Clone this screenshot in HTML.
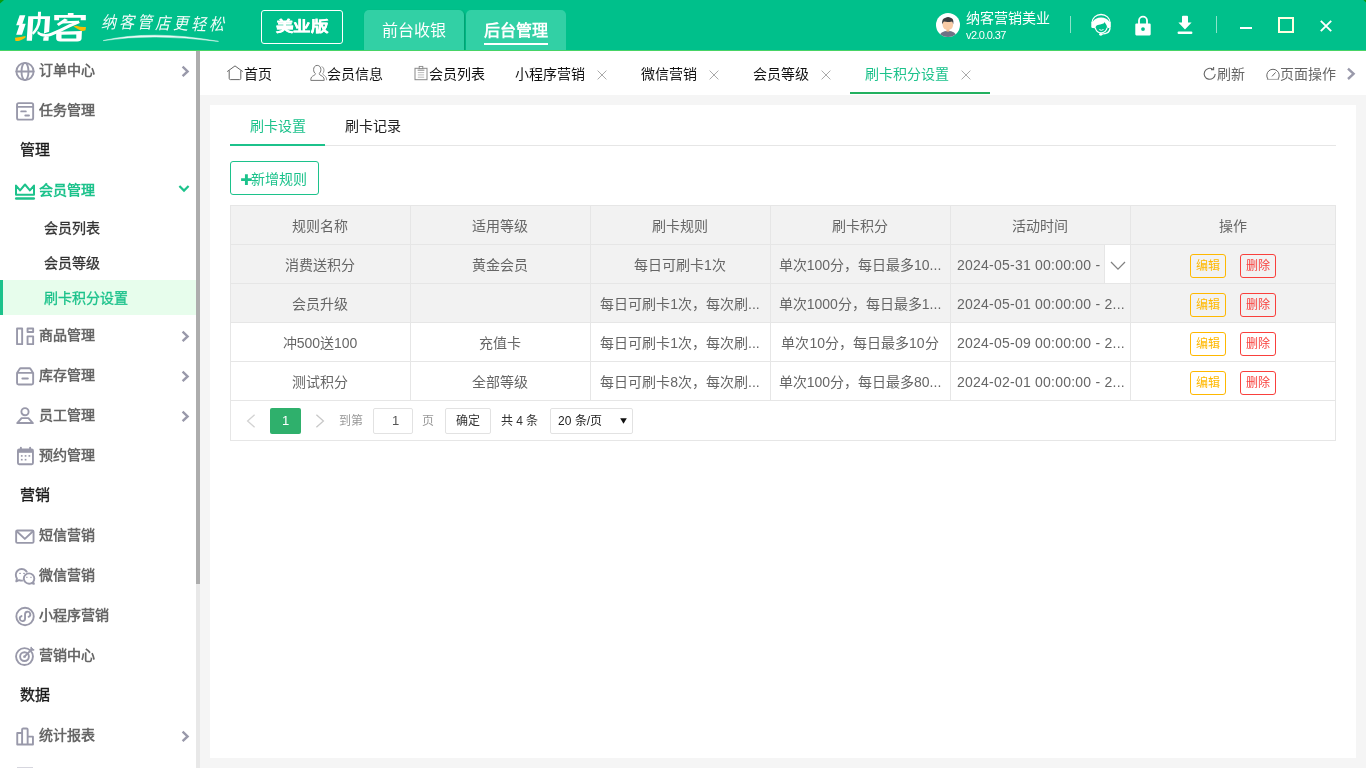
<!DOCTYPE html>
<html lang="zh-CN">
<head>
<meta charset="utf-8">
<title>纳客</title>
<style>
*{box-sizing:border-box;margin:0;padding:0}
html,body{width:1366px;height:768px;overflow:hidden;background:#f5f5f5}
body{font-family:"Liberation Sans",sans-serif;font-size:14px;color:#666;position:relative}
.abs{position:absolute}
svg{position:absolute;overflow:visible}
/* header */
#hdr{position:absolute;left:0;top:0;width:1366px;height:50px;background:#00c08b}
#hline{position:absolute;left:0;top:50px;width:1366px;height:1px;background:#48d466}
.t{position:absolute;white-space:nowrap;line-height:20px;height:20px}
.htab{position:absolute;top:10px;height:40px;width:100px;background:#32d0a5;border-radius:5px 5px 0 0;color:#fff;font-size:16px;text-align:center;line-height:41px}
/* sidebar */
#side,#tabs,#panel,#hdr{will-change:transform}
#side{position:absolute;left:0;top:51px;width:196px;height:717px;background:#fff;overflow:hidden}
#sbtrack{position:absolute;left:196px;top:51px;width:4px;height:717px;background:#e8e8e8}
#sbthumb{position:absolute;left:196px;top:51px;width:4px;height:533px;background:#adadad}
.mi{position:absolute;left:39px;font-size:14px;font-weight:bold;color:#666;line-height:20px;height:20px;white-space:nowrap}
.sec{position:absolute;left:20px;font-size:15px;font-weight:500;color:#1a1a1a;-webkit-text-stroke:.35px #1a1a1a;line-height:20px;height:20px;white-space:nowrap}
.sub{position:absolute;left:44px;font-size:14px;font-weight:500;color:#333;-webkit-text-stroke:.3px;line-height:20px;height:20px;white-space:nowrap}
.ic{stroke:#9999aa;stroke-width:1.9;fill:none;stroke-linecap:round;stroke-linejoin:round}
.tb{top:13px;font-size:14px;color:#111}
.p{top:306px;font-size:12px}
.hb{position:absolute;left:0;width:1106px;height:1px;background:#e6e6e6}
.vb{position:absolute;top:0;width:1px;height:196px;background:#e6e6e6}
.c{position:absolute;width:180px;height:39px;line-height:42px;text-align:center;font-size:14px;color:#666;white-space:nowrap;overflow:hidden}
.c.l{text-align:left;padding-left:7px;letter-spacing:.23px}
.be,.bd{position:absolute;width:36px;height:24px;border:1px solid #ffb800;border-radius:3px;color:#ffb800;font-size:12px;text-align:center;line-height:22px;white-space:nowrap}
.be{left:960px}
.bd{left:1010px;border-color:#f9403c;color:#f9403c}
</style>
</head>
<body>
<!-- ================= HEADER ================= -->
<div id="hdr">
  <!-- logo -->
  <svg id="logo" style="left:10px;top:6px" width="80" height="40" viewBox="0 0 1366 683" aria-label="纳客">
    <g fill="#fff">
      <!-- lightning (silk radical) -->
      <path d="M165 160 H262 L212 305 H268 L205 490 H105 L160 330 H105 Z"/>
      <!-- nei: left leg, top bar, right leg -->
      <path d="M312 175 H685 L668 440 L580 470 L596 222 H398 L375 595 H285 Z"/>
      <path d="M572 535 L662 520 L657 595 H566 Z"/>
      <!-- centre stem -->
      <path d="M478 100 H530 L522 270 Q505 390 400 492 L372 462 Q462 370 474 262 Z"/>
      <!-- long swoosh -->
      <path d="M470 425 Q560 505 690 462 Q850 400 1000 318 L1172 250 L1192 292 L1015 366 Q850 455 700 512 Q560 560 470 480 Z"/>
      <!-- ke: roof -->
      <path d="M988 118 H1085 V152 H1295 V245 H1207 V200 H838 V245 H755 V152 H988 Z"/>
      <!-- ke: left-falling stroke -->
      <path d="M935 212 L990 238 L832 342 L798 308 Z"/>
      <!-- ke: upper stroke of 夂 -->
      <path d="M905 262 L1178 250 L1150 292 L890 300 Z"/>
      <!-- ke: mouth -->
      <path d="M790 440 L1228 428 L1222 560 Q1215 605 1150 605 H860 Q790 605 788 550 Z M880 490 V555 H1132 V486 Z" fill-rule="evenodd"/>
    </g>
    <g fill="#fbbc05">
      <path d="M85 540 Q180 535 266 512 L262 542 Q210 575 160 594 Q120 602 93 596 Z"/>
      <path d="M1085 348 Q1120 330 1150 340 Q1200 365 1297 358 L1290 415 Q1245 432 1212 424 Q1160 395 1085 348 Z"/>
    </g>
  </svg>
  <!-- slogan -->
  <div class="t" style="left:101px;top:12px;font-size:15px;font-style:italic;color:#fff;letter-spacing:3.1px;font-weight:400;opacity:.95;transform:rotate(1.4deg) scaleY(1.12);transform-origin:left center">纳客管店更轻松</div>
  <svg style="left:100px;top:34px" width="130" height="10" viewBox="0 0 130 10">
    <path d="M3.2 6.6 Q52 -4.6 118.5 7.4 Q52 -1 3.2 6.6Z" fill="#fff" stroke="#fff" stroke-width=".5" opacity=".92"/>
  </svg>
  <!-- version box -->
  <div class="abs" style="left:261px;top:10px;width:82px;height:34px;border:1px solid #fff;border-radius:3px;color:#fff;font-size:14px;font-weight:bold;text-align:center;line-height:31px"><span style="display:inline-block;transform:scaleX(1.25);-webkit-text-stroke:.3px #fff">美业版</span></div>
  <!-- tabs -->
  <div class="htab" style="left:364px;box-shadow:1px 1px 2px rgba(0,80,50,.35)">前台收银</div>
  <div class="htab" style="left:466px;font-weight:bold">后台管理</div>
  <div class="abs" style="left:484px;top:43px;width:64px;height:2px;background:#fff"></div>
  <!-- avatar -->
  <svg style="left:936px;top:13px" width="24" height="24" viewBox="0 0 24 24">
    <defs><clipPath id="avc"><circle cx="12" cy="12" r="12"/></clipPath></defs>
    <circle cx="12" cy="12" r="12" fill="#fff"/>
    <g clip-path="url(#avc)">
      <ellipse cx="11.9" cy="23.6" rx="8.7" ry="5.9" fill="#6f7285"/>
      <rect x="10.4" y="15" width="3" height="3.6" fill="#eeb98f"/>
      <rect x="6.7" y="6.5" width="10.3" height="10.3" rx="4.6" fill="#f8cba6"/>
      <path d="M6.2 11.6 Q5.4 5.6 9.6 4.8 Q12 3.4 14.6 4.8 Q18.2 5.6 17.2 11.4 Q16.8 9 16 8.4 Q12 9.6 8 8.6 Q6.8 9.4 6.2 11.6Z" fill="#3c3d40"/>
    </g>
  </svg>
  <div class="t" style="left:966px;top:8px;font-size:14px;color:#fff">纳客营销美业</div>
  <div class="t" style="left:966px;top:25px;font-size:11px;color:#fff;letter-spacing:-.6px">v2.0.0.37</div>
  <div class="abs" style="left:1070px;top:16px;width:1px;height:17px;background:rgba(255,255,255,.55)"></div>
  <!-- headset -->
  <svg style="left:1090px;top:13px" width="22" height="24" viewBox="0 0 22 24">
    <path d="M2.04 10 V9.6 A9 8.1 0 0 1 20.04 9.6 V10" fill="none" stroke="#fff" stroke-width="1.3"/>
    <path d="M1.3 14 V10 Q1.4 9.2 2.6 9 C4.2 6 7.2 4.4 11.04 4.4 C14.9 4.4 17.9 6 19.5 9 Q20.7 9.2 20.8 10 V14 Q20.6 15 19.4 15 H18.4 Q17.2 14.9 17 14.2 Q16.9 12.6 16.1 11.6 Q15.4 10.6 14.7 8.9 Q14.2 10.2 12.6 10.8 Q10 11.7 7.8 12 Q6.4 12.4 6 13.2 Q5.5 14.2 5.3 14.9 Q4.6 15.2 3.5 15.1 H2.6 Q1.5 15 1.3 14Z" fill="#fff"/>
    <path d="M5.2 14.6 Q6.4 19.7 11.04 19.8 Q15.8 19.7 17.2 14.6" fill="none" stroke="#fff" stroke-width="1.2"/>
    <path d="M9.3 16.6 Q11.3 18.1 13.5 16.5" fill="none" stroke="#fff" stroke-width="1"/>
    <path d="M20.1 14.6 Q19.8 18.4 17.6 19.6 Q15.4 20.8 12 21" fill="none" stroke="#fff" stroke-width="1.2"/>
    <ellipse cx="10.8" cy="21.3" rx="1.7" ry="1.4" fill="#fff"/>
  </svg>
  <!-- lock -->
  <svg style="left:1135px;top:15px" width="16" height="21" viewBox="0 0 16 21">
    <path d="M4 9 V5.6 A4 4 0 0 1 12 5.6 V9" fill="none" stroke="#fff" stroke-width="1.8"/>
    <path d="M1.4 8.4 H14.6 A1.1 1.1 0 0 1 15.7 9.5 V19.3 A1.1 1.1 0 0 1 14.6 20.4 H1.4 A1.1 1.1 0 0 1 .3 19.3 V9.5 A1.1 1.1 0 0 1 1.4 8.4Z M8 12.2 A1.9 1.9 0 1 0 8 16 A1.9 1.9 0 1 0 8 12.2Z" fill="#fff" fill-rule="evenodd"/>
  </svg>
  <!-- download -->
  <svg style="left:1177px;top:15px" width="16" height="20" viewBox="0 0 16 20">
    <path d="M5 1.8 A1 1 0 0 1 6 .8 H10 A1 1 0 0 1 11 1.8 V7.6 H14.6 L8 14.6 L1.4 7.6 H5Z" fill="#fff"/>
    <rect x=".6" y="16.4" width="14.8" height="2.6" rx="1.1" fill="#fff"/>
  </svg>
  <div class="abs" style="left:1216px;top:16px;width:1px;height:17px;background:rgba(255,255,255,.55)"></div>
  <!-- window controls -->
  <div class="abs" style="left:1240px;top:27px;width:12px;height:2px;background:#fff"></div>
  <div class="abs" style="left:1278px;top:17px;width:16px;height:16px;border:2px solid #ffffe1"></div>
  <svg style="left:1320px;top:20px" width="12" height="12" viewBox="0 0 12 12">
    <path d="M.8 .8 L11.2 11.2 M11.2 .8 L.8 11.2" stroke="#fff" stroke-width="1.9" fill="none"/>
  </svg>
</div>
<div id="hline"></div>
<svg style="left:0;top:0" width="1366" height="4" viewBox="0 0 1366 4"><path d="M0 0H4L0 3.6Z M1366 0H1363.4L1366 2.4Z" fill="#0a9a10"/></svg>

<!-- ================= SIDEBAR ================= -->
<div id="side">
  <!-- coordinates inside #side are page-y minus 51 -->
  <!-- 订单中心 cy=71 -->
  <svg style="left:15px;top:10px" width="20" height="20" viewBox="0 0 20 20"><g class="ic"><circle cx="10" cy="10.5" r="8.6"/><ellipse cx="10" cy="10.5" rx="3.5" ry="8.6"/><path d="M1.4 10.5H18.6"/></g></svg>
  <div class="mi" style="top:9px">订单中心</div>
  <svg style="left:180px;top:14px" width="10" height="12" viewBox="0 0 10 12"><path d="M2.6 1.6 L7.6 6.4 L2.6 11.2" fill="none" stroke="#9999aa" stroke-width="2.4"/></svg>
  <!-- 任务管理 cy=111 -->
  <svg style="left:15px;top:50px" width="20" height="20" viewBox="0 0 20 20"><g class="ic"><rect x="2.05" y="2.15" width="16.1" height="16.5" rx="1.6"/><path d="M2.2 5.9H18"/><path d="M6.2 10.4H10.8M10.3 14.5H14"/></g></svg>
  <div class="mi" style="top:49px">任务管理</div>
  <!-- 管理 cy=150 -->
  <div class="sec" style="top:89px">管理</div>
  <!-- 会员管理 cy=190 -->
  <svg style="left:15px;top:130px" width="20" height="20" viewBox="0 0 20 20"><path d="M1 4.6 V13.7 H19 V4.6 L14.9 9.4 L10 3.5 L5.1 9.4 Z" fill="none" stroke="#1cc28b" stroke-width="2" stroke-linejoin="round"/><path d="M1.2 17.55H18.8" stroke="#1cc28b" stroke-width="2.5" stroke-linecap="round"/></svg>
  <div class="mi" style="top:129px;color:#1cc28b">会员管理</div>
  <svg style="left:178px;top:133px" width="12" height="10" viewBox="0 0 12 10"><path d="M1.4 2 L6 6.6 L10.6 2" fill="none" stroke="#1cc28b" stroke-width="2.2"/></svg>
  <!-- sub items -->
  <div class="sub" style="top:167px">会员列表</div>
  <div class="sub" style="top:202px">会员等级</div>
  <div class="abs" style="left:0;top:229px;width:196px;height:35px;background:#e7fdec"></div>
  <div class="abs" style="left:0;top:229px;width:3px;height:35px;background:#1cc28b"></div>
  <div class="sub" style="top:237px;color:#1cc28b">刷卡积分设置</div>
  <!-- 商品管理 cy=336 -->
  <svg style="left:15px;top:275px" width="20" height="20" viewBox="0 0 20 20"><g class="ic" stroke-linejoin="miter"><rect x="2.05" y="2.55" width="5.1" height="15.6"/><rect x="12.55" y="2.55" width="5.6" height="3.4"/><rect x="12.55" y="10.35" width="5.6" height="7.8"/></g></svg>
  <div class="mi" style="top:274px">商品管理</div>
  <svg style="left:180px;top:279px" width="10" height="12" viewBox="0 0 10 12"><path d="M2.6 1.6 L7.6 6.4 L2.6 11.2" fill="none" stroke="#9999aa" stroke-width="2.4"/></svg>
  <!-- 库存管理 cy=376 -->
  <svg style="left:15px;top:315px" width="20" height="20" viewBox="0 0 20 20"><g class="ic"><path d="M2.05 6.9 L4.6 2.9 Q5 2.25 5.8 2.25 H14.4 Q15.2 2.25 15.6 2.9 L18.15 6.9 V17 Q18.15 18.5 16.65 18.5 H3.55 Q2.05 18.5 2.05 17 Z M2.05 6.9 H18.15"/><path d="M7.4 12.6H12.8" stroke-width="2"/></g></svg>
  <div class="mi" style="top:314px">库存管理</div>
  <svg style="left:180px;top:319px" width="10" height="12" viewBox="0 0 10 12"><path d="M2.6 1.6 L7.6 6.4 L2.6 11.2" fill="none" stroke="#9999aa" stroke-width="2.4"/></svg>
  <!-- 员工管理 cy=416 -->
  <svg style="left:15px;top:355px" width="20" height="20" viewBox="0 0 20 20"><g class="ic"><circle cx="10" cy="5.7" r="3.6"/><path d="M2.2 17.05 L6.6 12.15 H13.4 L17.9 17.05 Z"/></g></svg>
  <div class="mi" style="top:354px">员工管理</div>
  <svg style="left:180px;top:359px" width="10" height="12" viewBox="0 0 10 12"><path d="M2.6 1.6 L7.6 6.4 L2.6 11.2" fill="none" stroke="#9999aa" stroke-width="2.4"/></svg>
  <!-- 预约管理 cy=456 -->
  <svg style="left:15px;top:395px" width="20" height="20" viewBox="0 0 20 20"><g class="ic"><rect x="2.95" y="3.55" width="15" height="14.7" rx="1.2"/><path d="M5.9 1.6V4M15.1 1.6V4"/><path d="M3 5.3H18" stroke-width="3" stroke-linecap="butt"/></g><g fill="#9999aa"><rect x="5.9" y="9.1" width="1.7" height="1.6"/><rect x="9.7" y="9.1" width="1.7" height="1.6"/><rect x="13.5" y="9.1" width="1.7" height="1.6"/><rect x="5.9" y="12.9" width="1.7" height="1.6"/><rect x="9.7" y="12.9" width="1.7" height="1.6"/></g></svg>
  <div class="mi" style="top:394px">预约管理</div>
  <!-- 营销 cy=495 -->
  <div class="sec" style="top:434px">营销</div>
  <!-- 短信营销 cy=536 -->
  <svg style="left:15px;top:475px" width="20" height="20" viewBox="0 0 20 20"><g class="ic"><rect x="1.15" y="4.45" width="17.4" height="12.4" rx="1.2"/><path d="M1.7 5.3 L9.85 12.9 L18 5.3"/></g></svg>
  <div class="mi" style="top:474px">短信营销</div>
  <!-- 微信营销 cy=576 -->
  <svg style="left:15px;top:515px" width="20" height="20" viewBox="0 0 20 20"><g class="ic" stroke-width="1.5"><path d="M6.7 3.05 C10 3.05 12.6 5.6 12.6 8.85 C12.6 12.1 10 14.65 6.7 14.65 C5.7 14.65 4.8 14.45 4 14.1 L1.3 15.3 L1.9 12.6 C1.2 11.5 .8 10.2 .8 8.85 C.8 5.6 3.4 3.05 6.7 3.05Z"/><path d="M14.05 7.4 C16.95 7.4 19.3 9.7 19.3 12.55 C19.3 13.8 18.85 14.9 18.1 15.8 L18.9 17.9 L16.6 17 C15.85 17.45 15 17.7 14.05 17.7 C11.15 17.7 8.8 15.4 8.8 12.55 C8.8 9.7 11.15 7.4 14.05 7.4Z" fill="#fff" stroke="#fff" stroke-width="2.6"/><path d="M14.05 7.4 C16.95 7.4 19.3 9.7 19.3 12.55 C19.3 13.8 18.85 14.9 18.1 15.8 L18.9 17.9 L16.6 17 C15.85 17.45 15 17.7 14.05 17.7 C11.15 17.7 8.8 15.4 8.8 12.55 C8.8 9.7 11.15 7.4 14.05 7.4Z" fill="#fff"/></g><g fill="#9999aa"><rect x="4.2" y="6.8" width="1.7" height="1.1" rx=".5"/><rect x="8.2" y="6.8" width="1.7" height="1.1" rx=".5"/><rect x="11" y="10.7" width="1.7" height="1.1" rx=".5"/><rect x="15.1" y="10.7" width="1.7" height="1.1" rx=".5"/></g></svg>
  <div class="mi" style="top:514px">微信营销</div>
  <!-- 小程序营销 cy=616 -->
  <svg style="left:15px;top:555px" width="20" height="20" viewBox="0 0 20 20"><g class="ic" stroke-width="1.7"><circle cx="10.04" cy="10.5" r="8.7"/><path d="M13.57 10.77 A2.63 2.63 0 1 0 10.04 8.3 V12.5 A2.63 2.63 0 1 1 6.51 10.03" stroke-width="1.9"/></g></svg>
  <div class="mi" style="top:554px">小程序营销</div>
  <!-- 营销中心 cy=656 -->
  <svg style="left:15px;top:595px" width="20" height="20" viewBox="0 0 20 20"><g class="ic" stroke-width="1.8"><circle cx="9.5" cy="10.6" r="8.45"/><circle cx="9.5" cy="10.6" r="4.4"/><path d="M9.5 10.6 L17.2 2.9" stroke-width="1.9"/><path d="M16.2 1.5 V3.9 H18.6" stroke-width="1.6"/></g><rect x="8.3" y="9.4" width="2.4" height="2.4" rx=".6" fill="#9999aa"/></svg>
  <div class="mi" style="top:594px">营销中心</div>
  <!-- 数据 cy=695 -->
  <div class="sec" style="top:634px">数据</div>
  <!-- 统计报表 cy=736 -->
  <svg style="left:15px;top:675px" width="20" height="20" viewBox="0 0 20 20"><g class="ic"><path d="M2.25 18.55 V7.05 H7.1 V3.6 Q7.1 2.45 8.25 2.45 H11.5 Q12.65 2.45 12.65 3.6 V10.65 H17.95 V18.55 Z M7.1 7.05 V18.55 M12.65 10.65 V18.55"/></g></svg>
  <div class="mi" style="top:674px">统计报表</div>
  <svg style="left:180px;top:679px" width="10" height="12" viewBox="0 0 10 12"><path d="M2.6 1.6 L7.6 6.4 L2.6 11.2" fill="none" stroke="#9999aa" stroke-width="2.4"/></svg>
  <div class="abs" style="left:17px;top:716px;width:16px;height:1px;background:#d6d6de"></div>
</div>
<div id="sbtrack"></div><div id="sbthumb"></div>

<!-- ================= TAB BAR ================= -->
<div id="tabs" class="abs" style="left:200px;top:51px;width:1166px;height:44px;background:#fff">
  <!-- coords inside #tabs: x = page-200, y = page-51 -->
  <!-- 首页 -->
  <svg style="left:26px;top:14px" width="18" height="16" viewBox="0 0 18 16"><path d="M1.2 6.6 L9 .9 L16.8 6.6 M3.2 5.4 V13.4 Q3.2 14.6 4.4 14.6 H13.6 Q14.8 14.6 14.8 13.4 V5.4" fill="none" stroke="#666" stroke-width="1"/></svg>
  <div class="t tb" style="left:44px">首页</div>
  <!-- 会员信息 -->
  <svg style="left:110px;top:13px" width="18" height="18" viewBox="0 0 18 18"><path d="M7.2 1.4 C9.6 1.4 10.9 3.3 10.9 5.6 C10.9 7.4 10.1 8.9 9 9.7 C9.2 10.7 10.6 11.2 12.2 12.2 C13.8 13.2 14.2 14.6 14.2 16.4 H.8 C.8 14.6 1 13.2 2.6 12.2 C4.2 11.2 5.4 10.7 5.5 9.7 C4.3 8.9 3.6 7.4 3.6 5.6 C3.6 3.3 4.9 1.4 7.2 1.4Z" fill="none" stroke="#777" stroke-width="1"/><path d="M11.6 2.6 C13.2 3 14 4.6 14 6.2 C14 7.8 13.4 9 12.6 9.8 C13 10.8 14.4 11.4 15.4 12.4 C16.4 13.4 16.6 14.6 16.6 16.2" fill="none" stroke="#999" stroke-width="1"/></svg>
  <div class="t tb" style="left:127px">会员信息</div>
  <!-- 会员列表 -->
  <svg style="left:214px;top:14px" width="14" height="16" viewBox="0 0 14 16"><rect x="1" y="3.3" width="12" height="11.4" fill="none" stroke="#888" stroke-width="1"/><rect x="5.2" y="1.4" width="3.6" height="2.2" fill="#fff" stroke="#888" stroke-width=".9"/><path d="M3.6 5.2H10.4" stroke="#999" stroke-width="1.2"/><path d="M3.8 7.6H10.2M3.8 9.9H10.2M3.8 12.2H10.2" stroke="#bbb" stroke-width="1"/></svg>
  <div class="t tb" style="left:229px">会员列表</div>
  <!-- 小程序营销 -->
  <div class="t tb" style="left:315px">小程序营销</div>
  <svg class="tx" style="left:397px;top:19px" width="10" height="10" viewBox="0 0 10 10"><path d="M.6 .6 L9.4 9.4 M9.4 .6 L.6 9.4" stroke="#aaa" stroke-width="1" fill="none"/></svg>
  <!-- 微信营销 -->
  <div class="t tb" style="left:441px">微信营销</div>
  <svg class="tx" style="left:509px;top:19px" width="10" height="10" viewBox="0 0 10 10"><path d="M.6 .6 L9.4 9.4 M9.4 .6 L.6 9.4" stroke="#aaa" stroke-width="1" fill="none"/></svg>
  <!-- 会员等级 -->
  <div class="t tb" style="left:553px">会员等级</div>
  <svg class="tx" style="left:621px;top:19px" width="10" height="10" viewBox="0 0 10 10"><path d="M.6 .6 L9.4 9.4 M9.4 .6 L.6 9.4" stroke="#aaa" stroke-width="1" fill="none"/></svg>
  <!-- 刷卡积分设置 (active) -->
  <div class="t tb" style="left:665px;color:#1cc28b">刷卡积分设置</div>
  <svg class="tx" style="left:761px;top:19px" width="10" height="10" viewBox="0 0 10 10"><path d="M.6 .6 L9.4 9.4 M9.4 .6 L.6 9.4" stroke="#aaa" stroke-width="1" fill="none"/></svg>
  <div class="abs" style="left:650px;top:41px;width:140px;height:2px;background:#22b05f"></div>
  <!-- right tools -->
  <svg style="left:1003px;top:15px" width="14" height="14" viewBox="0 0 14 14"><path d="M12.2 8 A5.5 5.5 0 1 1 10 3.4" fill="none" stroke="#666" stroke-width="1.1"/><path d="M8 3.6 H10.6 V1" fill="none" stroke="#666" stroke-width="1.1"/></svg>
  <div class="t tb" style="left:1017px;color:#666">刷新</div>
  <svg style="left:1066px;top:15px" width="14" height="14" viewBox="0 0 14 14"><path d="M1.9 13 A6.2 6.2 0 1 1 12.1 13" fill="none" stroke="#666" stroke-width="1"/><path d="M.9 13.4H13.1" stroke="#aaa" stroke-width="1"/><path d="M6 10.4 L9.6 6.4" stroke="#666" stroke-width="1"/></svg>
  <div class="t tb" style="left:1080px;color:#666">页面操作</div>
  <svg style="left:1146px;top:16px" width="10" height="14" viewBox="0 0 10 14"><path d="M2 1.6 L7.6 6.8 L2 12" fill="none" stroke="#9999aa" stroke-width="2.4"/></svg>
</div>

<!-- ================= MAIN PANEL ================= -->
<div id="panel" class="abs" style="left:210px;top:105px;width:1146px;height:653px;background:#fff">
  <!-- coords inside #panel: x = page-210, y = page-105 -->
  <!-- sub tabs -->
  <div class="abs" style="left:20px;top:40px;width:1106px;height:1px;background:#e6e6e6"></div>
  <div class="abs" style="left:20px;top:39px;width:95px;height:2px;background:#1cc28b"></div>
  <div class="t" style="left:40px;top:11px;font-size:14px;color:#1cc28b">刷卡设置</div>
  <div class="t" style="left:135px;top:11px;font-size:14px;color:#222">刷卡记录</div>
  <!-- add button -->
  <div class="abs" style="left:20px;top:56px;width:89px;height:34px;border:1px solid #1cc28b;border-radius:3px"></div>
  <svg style="left:31px;top:69px" width="11" height="11" viewBox="0 0 11 11"><path d="M5.4 .2V10.9M.1 5.6H10.8" stroke="#1cc28b" stroke-width="2.9"/></svg>
  <div class="t" style="left:41px;top:64px;font-size:14px;color:#1cc28b">新增规则</div>
  <!-- table -->
  <div id="tbl" class="abs" style="left:20px;top:100px;width:1106px;height:196px">
    <div class="abs" style="left:0;top:0;width:1106px;height:118px;background:#f2f2f2"></div>
    <!-- horizontal borders -->
    <div class="hb" style="top:0"></div><div class="hb" style="top:39px"></div><div class="hb" style="top:78px"></div><div class="hb" style="top:117px"></div><div class="hb" style="top:156px"></div><div class="hb" style="top:195px"></div>
    <!-- vertical borders -->
    <div class="vb" style="left:0"></div><div class="vb" style="left:180px"></div><div class="vb" style="left:360px"></div><div class="vb" style="left:540px"></div><div class="vb" style="left:720px"></div><div class="vb" style="left:900px"></div><div class="vb" style="left:1105px"></div>
    <!-- header -->
    <div class="c" style="left:0;top:0">规则名称</div><div class="c" style="left:180px;top:0">适用等级</div><div class="c" style="left:360px;top:0">刷卡规则</div><div class="c" style="left:540px;top:0">刷卡积分</div><div class="c" style="left:720px;top:0">活动时间</div><div class="c" style="left:900px;top:0;width:206px">操作</div>
    <!-- row 1 -->
    <div class="c" style="left:0;top:39px">消费送积分</div><div class="c" style="left:180px;top:39px">黄金会员</div><div class="c" style="left:360px;top:39px">每日可刷卡1次</div><div class="c" style="left:540px;top:39px">单次100分，每日最多10...</div><div class="c l" style="left:720px;top:39px">2024-05-31 00:00:00 -</div>
    <div class="abs" style="left:874px;top:40px;width:26px;height:38px;background:#fff;border-left:1px solid #e6e6e6"></div>
    <svg style="left:880px;top:56px" width="16" height="10" viewBox="0 0 16 10"><path d="M1 1 L8 8.2 L15 1" fill="none" stroke="#808080" stroke-width="1.25"/></svg>
    <!-- row 2 -->
    <div class="c" style="left:0;top:78px">会员升级</div><div class="c" style="left:360px;top:78px">每日可刷卡1次，每次刷...</div><div class="c" style="left:540px;top:78px">单次1000分，每日最多1...</div><div class="c l" style="left:720px;top:78px">2024-05-01 00:00:00 - 2...</div>
    <!-- row 3 -->
    <div class="c" style="left:0;top:117px">冲500送100</div><div class="c" style="left:180px;top:117px">充值卡</div><div class="c" style="left:360px;top:117px">每日可刷卡1次，每次刷...</div><div class="c" style="left:540px;top:117px">单次10分，每日最多10分</div><div class="c l" style="left:720px;top:117px">2024-05-09 00:00:00 - 2...</div>
    <!-- row 4 -->
    <div class="c" style="left:0;top:156px">测试积分</div><div class="c" style="left:180px;top:156px">全部等级</div><div class="c" style="left:360px;top:156px">每日可刷卡8次，每次刷...</div><div class="c" style="left:540px;top:156px">单次100分，每日最多80...</div><div class="c l" style="left:720px;top:156px">2024-02-01 00:00:00 - 2...</div>
    <!-- buttons -->
    <div class="be" style="top:49px">编辑</div><div class="bd" style="top:49px">删除</div>
    <div class="be" style="top:88px">编辑</div><div class="bd" style="top:88px">删除</div>
    <div class="be" style="top:127px">编辑</div><div class="bd" style="top:127px">删除</div>
    <div class="be" style="top:166px">编辑</div><div class="bd" style="top:166px">删除</div>
  </div>
  <!-- pagination -->
  <div class="abs" style="left:20px;top:295px;width:1106px;height:41px;border:1px solid #e6e6e6;border-top:none"></div>
  <svg style="left:36px;top:309px" width="10" height="14" viewBox="0 0 10 14"><path d="M8.6 .8 L1.6 7 L8.6 13.2" fill="none" stroke="#d2d2d2" stroke-width="1.3"/></svg>
  <div class="abs" style="left:60px;top:303px;width:31px;height:26px;background:#2fb06c;border-radius:2px;color:#fff;font-size:13px;text-align:center;line-height:26px">1</div>
  <svg style="left:105px;top:309px" width="10" height="14" viewBox="0 0 10 14"><path d="M1.4 .8 L8.4 7 L1.4 13.2" fill="none" stroke="#c8c8c8" stroke-width="1.3"/></svg>
  <div class="t p" style="left:129px;color:#999">到第</div>
  <div class="abs" style="left:163px;top:303px;width:40px;height:26px;border:1px solid #e2e2e2;border-radius:2px;color:#555;font-size:13px;text-align:center;line-height:24px;padding-left:5px">1</div>
  <div class="t p" style="left:212px;color:#999">页</div>
  <div class="abs" style="left:235px;top:303px;width:46px;height:26px;border:1px solid #e2e2e2;border-radius:2px;color:#333;font-size:12px;text-align:center;line-height:24px">确定</div>
  <div class="t p" style="left:291px;color:#333">共 4 条</div>
  <div class="abs" style="left:340px;top:303px;width:83px;height:26px;border:1px solid #e2e2e2;border-radius:2px;color:#222;font-size:12px;line-height:24px;padding-left:7px;white-space:nowrap">20 条/页</div>
  <svg style="left:410px;top:313px" width="7" height="6" viewBox="0 0 7 6"><path d="M.2 .2 H6.8 L3.5 5.8Z" fill="#111"/></svg>
</div>
</body>
</html>
